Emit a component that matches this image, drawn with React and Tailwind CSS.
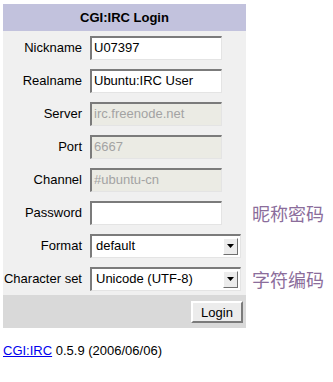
import React from 'react'

const font = { fontFamily: '"Liberation Sans", Arial, sans-serif' }

const Field = ({ value, disabled }) => (
  <div
    className={`w-[132px] h-[24px] flex items-center pl-[2px] text-[13px] border-t-2 border-l-2 border-[#7b7b7b] border-b border-r border-b-[#e4e4e4] border-r-[#e4e4e4] ${
      disabled ? 'bg-[#ebebe4] text-[#a3a3a3]' : 'bg-white text-black'
    }`}
  >
    {value}
  </div>
)

const Select = ({ value }) => (
  <div className="w-[151px] h-[24px] flex items-center justify-between pl-[4px] pr-[2px] text-[13px] bg-white border-t-2 border-l-2 border-[#7b7b7b] border-b border-r border-b-[#e4e4e4] border-r-[#e4e4e4]">
    <span>{value}</span>
    <span className="w-[15px] h-[17px] flex items-center justify-center bg-[#ececec] border border-t-white border-l-white border-b-[#6f6f6f] border-r-[#6f6f6f]">
      <svg width="7" height="4" viewBox="0 0 7 4">
        <polygon points="0,0 7,0 3.5,4" fill="#000" />
      </svg>
    </span>
  </div>
)

const rows = [
  { label: 'Nickname', el: <Field value="U07397" /> },
  { label: 'Realname', el: <Field value="Ubuntu:IRC User" /> },
  { label: 'Server', el: <Field value="irc.freenode.net" disabled /> },
  { label: 'Port', el: <Field value="6667" disabled /> },
  { label: 'Channel', el: <Field value="#ubuntu-cn" disabled /> },
  { label: 'Password', el: <Field value="" />, note: '昵称密码' },
  { label: 'Format', el: <Select value="default" /> },
  { label: 'Character set', el: <Select value="Unicode (UTF-8)" />, note: '字符编码' },
]

export default function App() {
  return (
    <div className="w-[333px] h-[382px] bg-white pt-[4px] pl-[3px] text-black" style={font}>
      <div className="w-[243px] h-[27px] bg-[#c2c2dd] flex items-center justify-center text-[13px] font-bold">
        CGI:IRC Login
      </div>

      {rows.map((r) => (
        <div key={r.label} className="flex items-center">
          <div className="w-[243px] h-[33px] bg-[#f0f0f0] flex items-center">
            <div className="w-[83px] pr-[4px] text-right text-[13px] whitespace-nowrap">{r.label}</div>
            <div className="ml-[4px]">{r.el}</div>
          </div>
          {r.note && (
            <div
              className="ml-[6px] text-[18px] text-[#8b6d9b] leading-none"
              style={{ fontFamily: '"Noto Sans CJK SC", sans-serif' }}
            >
              {r.note}
            </div>
          )}
        </div>
      ))}

      <div className="w-[243px] h-[33px] bg-[#d9d9d9] flex items-center justify-end pr-[3px]">
        <button className="w-[52px] h-[22px] bg-[#ececec] text-[13px] border-2 border-t-white border-l-white border-b-[#7b7b7b] border-r-[#7b7b7b]">
          Login
        </button>
      </div>

      <div className="mt-[13px] text-[13px]">
        <a href="#" className="text-[#0000ee] underline">CGI:IRC</a> 0.5.9 (2006/06/06)
      </div>
    </div>
  )
}
